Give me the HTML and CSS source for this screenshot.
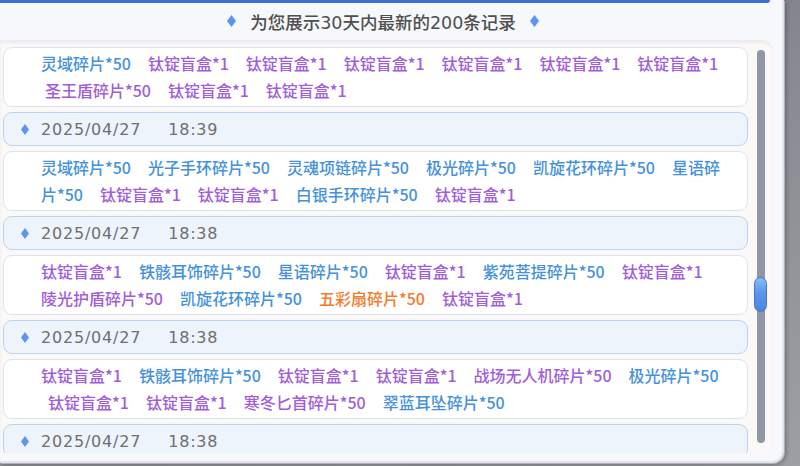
FILE: index.html
```html
<!DOCTYPE html>
<html lang="zh-CN">
<head>
  <meta charset="UTF-8" />
  <title>记录</title>
  <link rel="stylesheet" href="styles.css">
</head>
<body>
  <div class="panel">
    <div class="topbar"></div>
    <div class="header">
      <svg class="gem" width="9" height="12" viewBox="0 0 9 12"><polygon points="4.5,0 9,6 4.5,12 0,6" /></svg>
      <span>为您展示30天内最新的200条记录</span>
      <svg class="gem" width="9" height="12" viewBox="0 0 9 12"><polygon points="4.5,0 9,6 4.5,12 0,6" /></svg>
    </div>

    <div class="list">
      <div class="rows">
        <div class="card">
          <div class="line">
            <span class="b">灵域碎片*50</span><span class="p">钛锭盲盒*1</span><span class="p">钛锭盲盒*1</span><span class="p">钛锭盲盒*1</span><span class="p">钛锭盲盒*1</span><span class="p">钛锭盲盒*1</span><span class="p">钛锭盲盒*1</span>
          </div>
          <div class="line in4">
            <span class="p">圣王盾碎片*50</span><span class="p">钛锭盲盒*1</span><span class="p">钛锭盲盒*1</span>
          </div>
        </div>

        <div class="date">
          <svg class="gem" width="8" height="11" viewBox="0 0 8 11"><polygon points="4,0 8,5.5 4,11 0,5.5" /></svg>
          <span>2025/04/27</span><span class="time">18:39</span>
        </div>

        <div class="card">
          <div class="line">
            <span class="b">灵域碎片*50</span><span class="b">光子手环碎片*50</span><span class="b">灵魂项链碎片*50</span><span class="b">极光碎片*50</span><span class="b">凯旋花环碎片*50</span><span class="b">星语碎</span>
          </div>
          <div class="line">
            <span class="b">片*50</span><span class="p">钛锭盲盒*1</span><span class="p">钛锭盲盒*1</span><span class="b">白银手环碎片*50</span><span class="p">钛锭盲盒*1</span>
          </div>
        </div>

        <div class="date">
          <svg class="gem" width="8" height="11" viewBox="0 0 8 11"><polygon points="4,0 8,5.5 4,11 0,5.5" /></svg>
          <span>2025/04/27</span><span class="time">18:38</span>
        </div>

        <div class="card">
          <div class="line">
            <span class="p">钛锭盲盒*1</span><span class="b">铁骸耳饰碎片*50</span><span class="b">星语碎片*50</span><span class="p">钛锭盲盒*1</span><span class="b">紫苑菩提碎片*50</span><span class="p">钛锭盲盒*1</span>
          </div>
          <div class="line">
            <span class="p">陵光护盾碎片*50</span><span class="b">凯旋花环碎片*50</span><span class="o">五彩扇碎片*50</span><span class="p">钛锭盲盒*1</span>
          </div>
        </div>

        <div class="date">
          <svg class="gem" width="8" height="11" viewBox="0 0 8 11"><polygon points="4,0 8,5.5 4,11 0,5.5" /></svg>
          <span>2025/04/27</span><span class="time">18:38</span>
        </div>

        <div class="card">
          <div class="line">
            <span class="p">钛锭盲盒*1</span><span class="b">铁骸耳饰碎片*50</span><span class="p">钛锭盲盒*1</span><span class="p">钛锭盲盒*1</span><span class="p">战场无人机碎片*50</span><span class="b">极光碎片*50</span>
          </div>
          <div class="line in7">
            <span class="p">钛锭盲盒*1</span><span class="p">钛锭盲盒*1</span><span class="p">寒冬匕首碎片*50</span><span class="b">翠蓝耳坠碎片*50</span>
          </div>
        </div>

        <div class="date">
          <svg class="gem" width="8" height="11" viewBox="0 0 8 11"><polygon points="4,0 8,5.5 4,11 0,5.5" /></svg>
          <span>2025/04/27</span><span class="time">18:38</span>
        </div>
      </div>

      <div class="scroll">
        <div class="track">
          <div class="thumb"></div>
        </div>
      </div>
    </div>
  </div>
</body>
</html>
```

FILE: styles.css
```css
body {
  margin: 0;
  width: 800px;
  height: 466px;
  overflow: hidden;
  font-family: "Noto Sans CJK SC", sans-serif;
  background: linear-gradient(165deg, #4f5670 0%, #72767e 6%, #878a90 40%, #9c9fa4 100%);
}

.panel {
  width: 782px;
  height: 461px;
  display: flex;
  flex-direction: column;
  background: #f6f8fb;
  border-right: 2px solid #e2e6ec;
  border-bottom: 2px solid #e2e6ec;
  border-radius: 0 0 12px 0;
  box-shadow: 1px 1px 0 #aeb3bb, 2px 2px 4px rgba(0, 0, 0, 0.3);
}

.topbar {
  width: 770px;
  height: 3px;
  background: #3d6fd2;
  border-radius: 0 0 3px 0;
}

.header {
  width: 766px;
  height: 36px;
  padding-bottom: 1px;
  display: flex;
  justify-content: center;
  align-items: center;
  gap: 14px;
  color: #4f4f4f;
  font-family: "DejaVu Sans", "Noto Sans CJK SC", sans-serif;
  font-size: 17.5px;
  font-weight: 500;
}

.gem {
  flex-shrink: 0;
  fill: #5b95ee;
}

.list {
  width: 773px;
  height: 412px;
  display: flex;
  background: #fbf9f8;
  border-top: 1px solid #eceef2;
  border-radius: 0 10px 10px 0;
  box-shadow: inset 0 2px 3px rgba(0, 0, 0, 0.06);
  overflow: hidden;
}

.rows {
  width: 745px;
  margin-left: 3px;
  padding-top: 6px;
  display: flex;
  flex-direction: column;
  gap: 5px;
  overflow: hidden;
}

.card {
  flex-shrink: 0;
  height: 60px;
  box-sizing: border-box;
  padding: 2px 0 0 37px;
  background: #fff;
  border: 1px solid #dfe3ee;
  border-radius: 9px;
}

.line {
  display: flex;
  gap: 17px;
  height: 27px;
  line-height: 27px;
  white-space: nowrap;
  font-size: 16px;
  font-weight: 500;
}

.in4 {
  padding-left: 4px;
}

.in7 {
  padding-left: 7px;
}

.b { color: #4592db; }
.p { color: #a15ed8; }
.o { color: #f57a2e; }

.date {
  flex-shrink: 0;
  height: 34px;
  box-sizing: border-box;
  padding-left: 17px;
  display: flex;
  align-items: center;
  background: #eef4fb;
  border: 1px solid #b9d3f3;
  border-radius: 9px;
  color: #6f6f6f;
  font-family: "DejaVu Sans", sans-serif;
  font-size: 16px;
  letter-spacing: 0.8px;
}

.date .gem {
  margin-right: 12px;
}

.time {
  margin-left: 27px;
}

.scroll {
  width: 25px;
  padding: 9px 0;
  display: flex;
  justify-content: center;
}

.track {
  width: 8px;
  height: 393px;
  display: flex;
  flex-direction: column;
  align-items: center;
  background: #8f97a6;
  border-radius: 4px;
}

.thumb {
  flex-shrink: 0;
  width: 13px;
  height: 35px;
  margin-top: 227px;
  box-sizing: border-box;
  background: linear-gradient(#84bdf7, #5a97ea 45%, #4b84df);
  border: 1px solid #4a74c4;
  border-radius: 7px;
}
```
